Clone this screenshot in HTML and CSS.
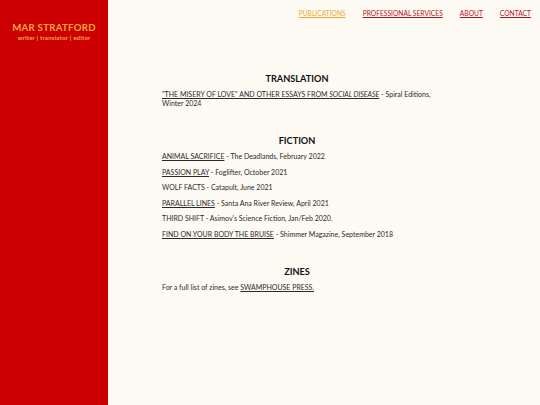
FILE: index.html
```html
<!DOCTYPE html>
<html>
<head>
<meta charset="utf-8">
<link rel="stylesheet" href="styles.css">
</head>
<body>
<div class="page">
  <aside class="sidebar">
    <div class="brand">MAR STRATFORD</div>
    <div class="tagline">writer | translator | editor</div>
  </aside>
  <div class="main">
    <nav class="nav">
      <a class="nav-link active" href="#">PUBLICATIONS</a>
      <a class="nav-link" href="#">PROFESSIONAL SERVICES</a>
      <a class="nav-link" href="#">ABOUT</a>
      <a class="nav-link" href="#">CONTACT</a>
    </nav>
    <section class="content">
      <div class="section">
        <h2 class="heading">TRANSLATION</h2>
        <p class="entry"><a href="#">"THE MISERY OF LOVE" AND OTHER ESSAYS FROM <em class="title">SOCIAL DISEASE</em></a> - Spiral Editions, Winter 2024</p>
      </div>
      <div class="section">
        <h2 class="heading">FICTION</h2>
        <p class="entry"><a href="#">ANIMAL SACRIFICE</a> - The Deadlands, February 2022</p>
        <p class="entry"><a href="#">PASSION PLAY</a> - Foglifter, October 2021</p>
        <p class="entry">WOLF FACTS - Catapult, June 2021</p>
        <p class="entry"><a href="#">PARALLEL LINES</a> - Santa Ana River Review, April 2021</p>
        <p class="entry">THIRD SHIFT - Asimov's Science Fiction, Jan/Feb 2020.</p>
        <p class="entry"><a href="#">FIND ON YOUR BODY THE BRUISE</a> - Shimmer Magazine, September 2018</p>
      </div>
      <div class="section">
        <h2 class="heading">ZINES</h2>
        <p class="entry">For a full list of zines, see <a href="#">SWAMPHOUSE PRESS.</a></p>
      </div>
    </section>
  </div>
</div>
</body>
</html>
```

FILE: styles.css
```css
html, body {
  margin: 0;
  padding: 0;
  height: 100%;
}
body {
  background: #fcfaf3;
  font-family: "Lato", "Open Sans", sans-serif;
  color: #222;
}
.page {
  display: flex;
  min-height: 405px;
}
.sidebar {
  width: 108px;
  flex: none;
  background: #cc0000;
  display: flex;
  flex-direction: column;
  align-items: center;
  padding-top: 22px;
  box-sizing: border-box;
}
.brand {
  color: #f7a93c;
  font-weight: 700;
  font-size: 9.6px;
  letter-spacing: 0.3px;
  line-height: 12px;
}
.tagline {
  color: #f7a93c;
  font-size: 6.2px;
  font-weight: 700;
  line-height: 7px;
  letter-spacing: 0.15px;
  margin-top: 0;
}
.main {
  flex: 1;
  display: flex;
  flex-direction: column;
}
.nav {
  display: flex;
  justify-content: flex-end;
  gap: 17px;
  padding: 8px 9px 0 0;
  height: 18px;
}
.nav-link {
  font-size: 6.7px;
  color: #b8121f;
  text-decoration: underline;
  line-height: 10px;
}
.nav-link.active {
  color: #f3a73a;
}
.content {
  width: 270px;
  margin-left: 54px;
  padding-top: 46px;
}
.section {
  margin-bottom: 27px;
}
.heading {
  text-align: center;
  font-size: 9.2px;
  font-weight: 700;
  margin: 0 0 4px;
  line-height: 14px;
  color: #111;
}
.entry {
  font-size: 7px;
  line-height: 8.5px;
  margin: 0 0 7px;
  color: #2a2a2a;
}
.entry a {
  color: #2a2a2a;
  text-decoration: underline;
}
.title {
  font-style: italic;
  font-synthesis: style;
}
```
